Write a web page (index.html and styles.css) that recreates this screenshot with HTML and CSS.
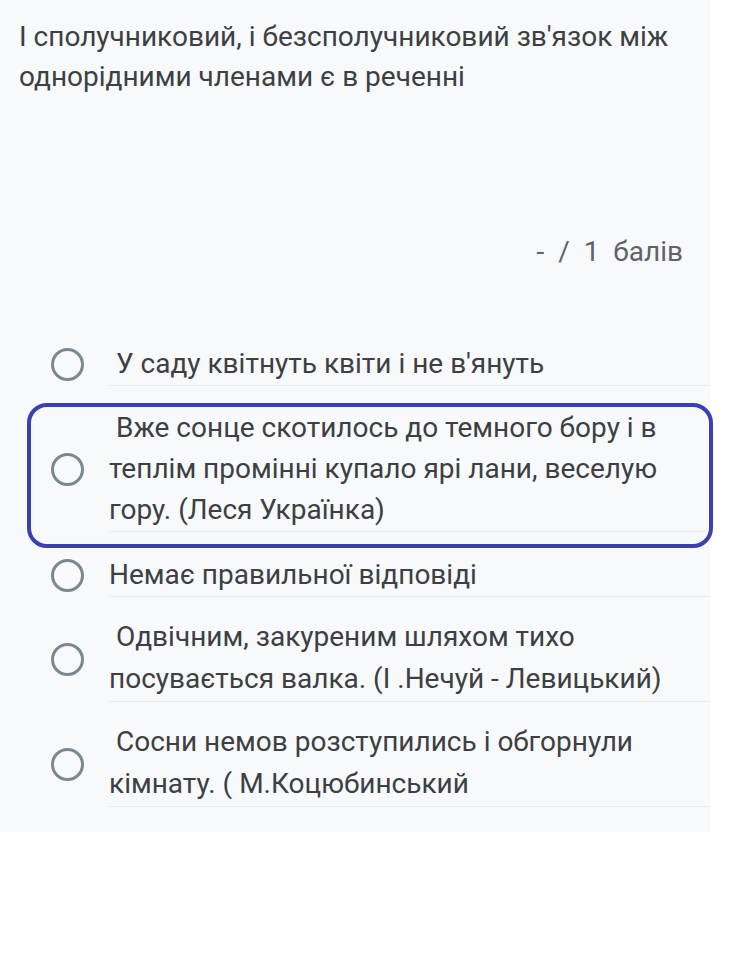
FILE: index.html
```html
<!DOCTYPE html>
<html lang="uk">
<head>
<meta charset="utf-8">
<link rel="stylesheet" href="styles.css">
</head>
<body>
<div class="panel">
  <div class="question"><span class="cond">І сполучниковий, і безсполучниковий зв'язок між</span><br><span class="cond">однорідними членами є в реченні</span></div>
  <div class="points">-  /  1  балів</div>
  <div class="options">
    <div class="option first">
      <span class="radio"></span>
      <div class="label"> У саду квітнуть квіти і не в'януть</div>
    </div>
    <div class="option selected">
      <span class="radio"></span>
      <div class="label"><span class="cond"> Вже сонце скотилось до темного бору і в</span><br><span class="cond">теплім промінні купало ярі лани, веселую</span><br><span class="cond">гору. (Леся Українка)</span></div>
    </div>
    <div class="option after-selected">
      <span class="radio"></span>
      <div class="label">Немає правильної відповіді</div>
    </div>
    <div class="option">
      <span class="radio"></span>
      <div class="label tall"> Одвічним, закуреним шляхом тихо<br>посувається валка. (І .Нечуй - Левицький)</div>
    </div>
    <div class="option">
      <span class="radio"></span>
      <div class="label tall"> Сосни немов розступились і обгорнули<br>кімнату. ( М.Коцюбинський</div>
    </div>
  </div>
</div>
</body>
</html>
```

FILE: styles.css
```css
html, body {
  margin: 0;
  padding: 0;
  background: #ffffff;
}

body {
  font-family: Roboto, "Noto Sans", sans-serif;
  color: #3c4043;
  width: 743px;
  height: 956px;
  overflow: hidden;
}

.panel {
  width: 710px;
  background: #f8f9fb;
  padding-bottom: 25px;
}

.cond {
  font-stretch: 90%;
}

.question {
  padding: 17px 20px 0 19px;
  font-size: 28px;
  line-height: 40px;
  color: #3c4043;
  white-space: pre;
}

.points {
  margin-top: 135px;
  padding-right: 27px;
  text-align: right;
  font-size: 28px;
  line-height: 40px;
  color: #5f6368;
  white-space: pre;
}

.options {
  display: flex;
  flex-direction: column;
}

.option {
  display: flex;
  align-items: center;
  padding-top: 19px;
}

.option.first {
  padding-top: 71px;
}

.radio {
  flex: none;
  width: 27px;
  height: 27px;
  border: 3.5px solid #7a898f;
  border-radius: 50%;
  margin-left: 51px;
  margin-right: 25px;
}

.label {
  flex: 1;
  font-size: 28px;
  line-height: 41px;
  white-space: pre;
  padding-bottom: 1px;
  border-bottom: 1px solid #e8eaed;
}

.label.tall {
  line-height: 42px;
}

.option.selected {
  margin: 17px -3px 0 27px;
  padding: 0 0 12px 0;
  border: 4px solid #3b3fb3;
  border-radius: 20px;
}

.option.selected .radio {
  margin-left: 20px;
}

.option.selected .label {
  margin-right: 4px;
}

.option.after-selected {
  padding-top: 6px;
}
```
